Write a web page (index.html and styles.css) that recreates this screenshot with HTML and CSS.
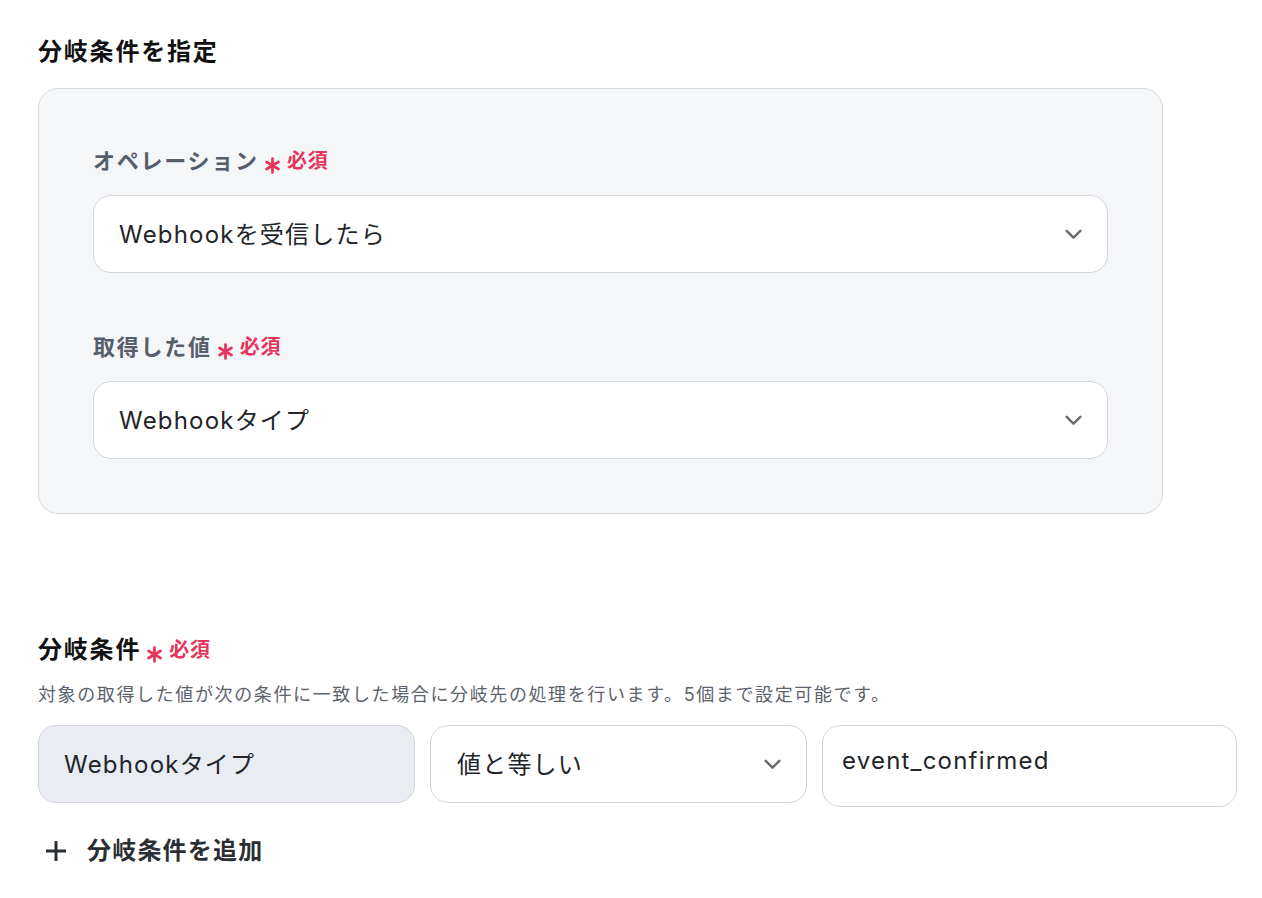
FILE: index.html
```html
<!DOCTYPE html>
<html lang="ja">
<head>
    <meta charset="UTF-8">
    <meta name="viewport" content="width=device-width, initial-scale=1.0">
    <title>分岐条件を指定</title>
    <link rel="stylesheet" href="styles.css">
</head>
<body>
    <div class="page">
        <h2 class="section-title">分岐条件を指定</h2>

        <div class="panel">
            <div class="field">
                <div class="field-label">オペレーション<span class="req"><svg class="req-mark" viewBox="0 0 16 16"><path d="M8 1.5v13M2.4 4.75l11.2 6.5M2.4 11.25l11.2-6.5"/></svg>必須</span></div>
                <div class="select">
                    <span class="val">Webhookを受信したら</span>
                    <svg class="chevron" viewBox="0 0 20 12"><path d="M2.5 2l7.5 7.5 7.5-7.5"/></svg>
                </div>
            </div>

            <div class="field">
                <div class="field-label">取得した値<span class="req"><svg class="req-mark" viewBox="0 0 16 16"><path d="M8 1.5v13M2.4 4.75l11.2 6.5M2.4 11.25l11.2-6.5"/></svg>必須</span></div>
                <div class="select">
                    <span class="val">Webhookタイプ</span>
                    <svg class="chevron" viewBox="0 0 20 12"><path d="M2.5 2l7.5 7.5 7.5-7.5"/></svg>
                </div>
            </div>
        </div>

        <h2 class="section-title branch-title">分岐条件<span class="req"><svg class="req-mark" viewBox="0 0 16 16"><path d="M8 1.5v13M2.4 4.75l11.2 6.5M2.4 11.25l11.2-6.5"/></svg>必須</span></h2>
        <p class="hint">対象の取得した値が次の条件に一致した場合に分岐先の処理を行います。5個まで設定可能です。</p>

        <div class="cond-row">
            <div class="cond-box locked"><span class="val">Webhookタイプ</span></div>
            <div class="cond-box select">
                <span class="val">値と等しい</span>
                <svg class="chevron" viewBox="0 0 20 12"><path d="M2.5 2l7.5 7.5 7.5-7.5"/></svg>
            </div>
            <div class="cond-box value">event_confirmed</div>
        </div>

        <div class="add-btn">
            <svg class="plus" viewBox="0 0 24 24"><path d="M12 2v20M2 12h20"/></svg>
            <span>分岐条件を追加</span>
        </div>
    </div>
</body>
</html>
```

FILE: styles.css
```css
body {
    margin: 0;
    background: #fff;
    font-family: Inter, "Noto Sans CJK JP", sans-serif;
    color: #1f2126;
}
.page {
    padding: 36px 0 40px 38px;
}
.section-title {
    margin: 0;
    font-size: 24px;
    line-height: 32px;
    font-weight: 700;
    letter-spacing: 0.075em;
    color: #111;
    display: flex;
    align-items: center;
}
.panel {
    width: 1125px;
    box-sizing: border-box;
    margin-top: 20px;
    padding: 56px 54px 54px;
    background: #f5f6f8;
    border: 1px solid #d6dae1;
    border-radius: 20px;
    display: flex;
    flex-direction: column;
    gap: 58px;
}
.field-label {
    display: flex;
    align-items: center;
    font-size: 22px;
    line-height: 32px;
    font-weight: 700;
    letter-spacing: 0.08em;
    color: #565e6b;
    margin-bottom: 18px;
}
.req {
    display: inline-flex;
    align-items: center;
    margin-left: 5px;
    color: #e5355c;
    font-size: 20px;
    font-weight: 700;
    letter-spacing: 0.04em;
}
.req-mark {
    width: 17px;
    height: 17px;
    margin: 8px 6px 0 0;
    fill: none;
    stroke: #e5355c;
    stroke-width: 2.6;
    stroke-linecap: round;
}
.select {
    height: 78px;
    box-sizing: border-box;
    background: #fff;
    border: 1px solid #d1d5dc;
    border-radius: 18px;
    padding: 0 24px 0 25px;
    display: flex;
    align-items: center;
    justify-content: space-between;
    font-size: 24px;
    letter-spacing: 0.05em;
    color: #22252a;
}
.val {
    padding-bottom: 4px;
}
.chevron {
    width: 19px;
    height: 11px;
    fill: none;
    stroke: #68696b;
    stroke-width: 2.6;
    stroke-linecap: round;
    stroke-linejoin: round;
}
.branch-title {
    margin-top: 120px;
}
.hint {
    margin: 17px 0 18px;
    font-size: 18px;
    line-height: 24px;
    letter-spacing: 0.09em;
    color: #5d636c;
}
.cond-row {
    width: 1199px;
    display: grid;
    grid-template-columns: 377px 377px 1fr;
    gap: 15px;
    align-items: start;
}
.cond-box {
    height: 78px;
    box-sizing: border-box;
    border: 1px solid #d1d5dc;
    border-radius: 18px;
    font-size: 24px;
    letter-spacing: 0.05em;
    color: #22252a;
}
.cond-box.locked {
    background: #e9ecf1;
    padding: 0 25px;
    display: flex;
    align-items: center;
}
.cond-box.select {
    padding: 0 24px 0 26px;
}
.cond-box.value {
    height: 82px;
    padding: 19px 19px 0;
    line-height: 32px;
    background: #fff;
}
.add-btn {
    margin-top: 28px;
    display: flex;
    align-items: center;
    gap: 19px;
    padding-left: 6px;
    font-size: 24px;
    line-height: 32px;
    font-weight: 700;
    letter-spacing: 0.05em;
    color: #2b2e33;
}
.plus {
    width: 24px;
    height: 24px;
    fill: none;
    stroke: #2b2e33;
    stroke-width: 3;
}
```
